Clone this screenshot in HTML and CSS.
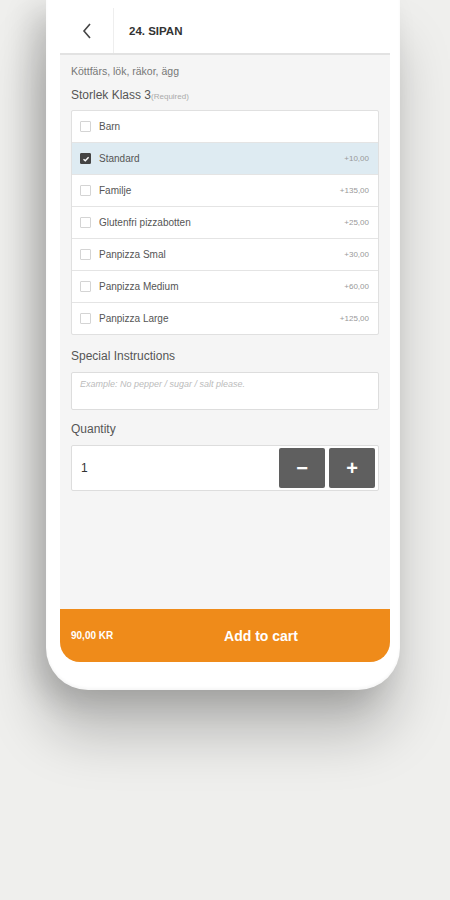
FILE: index.html
```html
<!DOCTYPE html>
<html lang="sv">
<head>
    <meta charset="UTF-8">
    <meta name="viewport" content="width=device-width, initial-scale=1.0">
    <title>24. SIPAN</title>
    <link rel="stylesheet" href="styles.css">
</head>
<body>
    <div class="phone">
        <div class="screen">
            <div class="topbar">
                <div class="back">
                    <svg width="12" height="18" viewBox="0 0 12 18"><path d="M9 2 L3 9 L9 16" fill="none" stroke="#444" stroke-width="1.6"/></svg>
                </div>
                <div class="title">24. SIPAN</div>
            </div>

            <div class="content">
                <p class="desc">Köttfärs, lök, räkor, ägg</p>
                <p class="group-title">Storlek Klass 3<span class="req">(Required)</span></p>

                <div class="options">
                    <div class="option">
                        <span class="check"></span>
                        <span class="name">Barn</span>
                        <span class="price"></span>
                    </div>
                    <div class="option selected">
                        <span class="check checked">
                            <svg width="8" height="8" viewBox="0 0 8 8"><path d="M1.5 4.2 L3.3 5.8 L6.6 2.2" fill="none" stroke="#fff" stroke-width="1.4"/></svg>
                        </span>
                        <span class="name">Standard</span>
                        <span class="price">+10,00</span>
                    </div>
                    <div class="option">
                        <span class="check"></span>
                        <span class="name">Familje</span>
                        <span class="price">+135,00</span>
                    </div>
                    <div class="option">
                        <span class="check"></span>
                        <span class="name">Glutenfri pizzabotten</span>
                        <span class="price">+25,00</span>
                    </div>
                    <div class="option">
                        <span class="check"></span>
                        <span class="name">Panpizza Smal</span>
                        <span class="price">+30,00</span>
                    </div>
                    <div class="option">
                        <span class="check"></span>
                        <span class="name">Panpizza Medium</span>
                        <span class="price">+60,00</span>
                    </div>
                    <div class="option">
                        <span class="check"></span>
                        <span class="name">Panpizza Large</span>
                        <span class="price">+125,00</span>
                    </div>
                </div>

                <p class="label">Special Instructions</p>
                <div class="instructions">Example: No pepper / sugar / salt please.</div>

                <p class="label label-qty">Quantity</p>
                <div class="quantity">
                    <span class="qty-value">1</span>
                    <button class="qty-btn">&minus;</button>
                    <button class="qty-btn">+</button>
                </div>
            </div>

            <div class="cart-bar">
                <div class="total">90,00 KR</div>
                <div class="add">Add to cart</div>
            </div>
        </div>
    </div>
</body>
</html>
```

FILE: styles.css
```css
body {
    margin: 0;
    padding: 0;
    height: 900px;
    overflow: hidden;
    background: #efefed;
    font-family: "Liberation Sans", Arial, sans-serif;
}
.phone {
    width: 330px;
    height: 662px;
    margin-left: 46px;
    padding: 0 10px 28px 14px;
    background: #fff;
    border-radius: 0 0 42px 42px;
    box-shadow: -14px 10px 30px rgba(0, 0, 0, 0.16), -4px 45px 55px rgba(0, 0, 0, 0.22), inset 0 -2px 3px rgba(0, 0, 0, 0.04);
}
.screen {
    height: 662px;
    background: #f5f5f5;
    border-radius: 0 0 20px 20px;
    overflow: hidden;
    display: flex;
    flex-direction: column;
}
/* Barra superior */
.topbar {
    height: 53px;
    background: #fff;
    border-bottom: 2px solid #e2e2e2;
    display: flex;
    align-items: stretch;
}
.back {
    width: 53px;
    border-right: 1px solid #eee;
    margin-top: 8px;
    display: flex;
    align-items: center;
    justify-content: center;
}
.title {
    display: flex;
    align-items: center;
    padding-left: 15px;
    padding-top: 8px;
    font-size: 11.5px;
    font-weight: bold;
    color: #333;
}
.content {
    flex: 1;
    padding: 0 11px;
}
.desc {
    margin: 10px 0 0;
    font-size: 10.5px;
    color: #777;
}
.group-title {
    margin: 11px 0 8px;
    font-size: 12px;
    color: #555;
}
.req {
    font-size: 8px;
    color: #aaa;
}
.options {
    background: #fff;
    border: 1px solid #e0e0e0;
    border-radius: 2px;
}
.option {
    height: 31px;
    display: flex;
    align-items: center;
    padding: 0 9px 0 8px;
    border-top: 1px solid #e4e4e4;
}
.option:first-child {
    border-top: none;
}
.option.selected {
    background: #deebf2;
}
.check {
    width: 9px;
    height: 9px;
    border: 1px solid #d4d4d4;
    border-radius: 1px;
    background: #fff;
    display: flex;
    align-items: center;
    justify-content: center;
}
.check.checked {
    background: #444;
    border-color: #444;
}
.name {
    flex: 1;
    margin-left: 8px;
    font-size: 10px;
    color: #555;
}
.price {
    font-size: 8px;
    color: #999;
}
.label {
    margin: 14px 0 9px;
    font-size: 12px;
    color: #555;
}
.label-qty {
    margin-top: 12px;
}
.instructions {
    height: 38px;
    background: #fff;
    border: 1px solid #ddd;
    border-radius: 2px;
    padding: 6px 8px 0;
    box-sizing: border-box;
    font-size: 9px;
    font-style: italic;
    color: #bbb;
}
.quantity {
    height: 46px;
    box-sizing: border-box;
    background: #fff;
    border: 1px solid #ddd;
    border-radius: 2px;
    display: flex;
    align-items: center;
    gap: 4px;
    padding: 0 3px 0 9px;
}
.qty-value {
    flex: 1;
    font-size: 12px;
    color: #333;
}
.qty-btn {
    width: 46px;
    height: 40px;
    border: none;
    border-radius: 2px;
    background: #5f5f5f;
    color: #fff;
    font-family: "Liberation Sans", Arial, sans-serif;
    font-size: 20px;
    font-weight: bold;
    padding: 0;
}
/* Barra de carrito */
.cart-bar {
    height: 53px;
    background: #ef8b1a;
    display: flex;
    align-items: center;
    color: #fff;
    font-weight: bold;
}
.total {
    width: 61px;
    padding-left: 11px;
    font-size: 10px;
}
.add {
    flex: 1;
    text-align: center;
    font-size: 14px;
}
```
